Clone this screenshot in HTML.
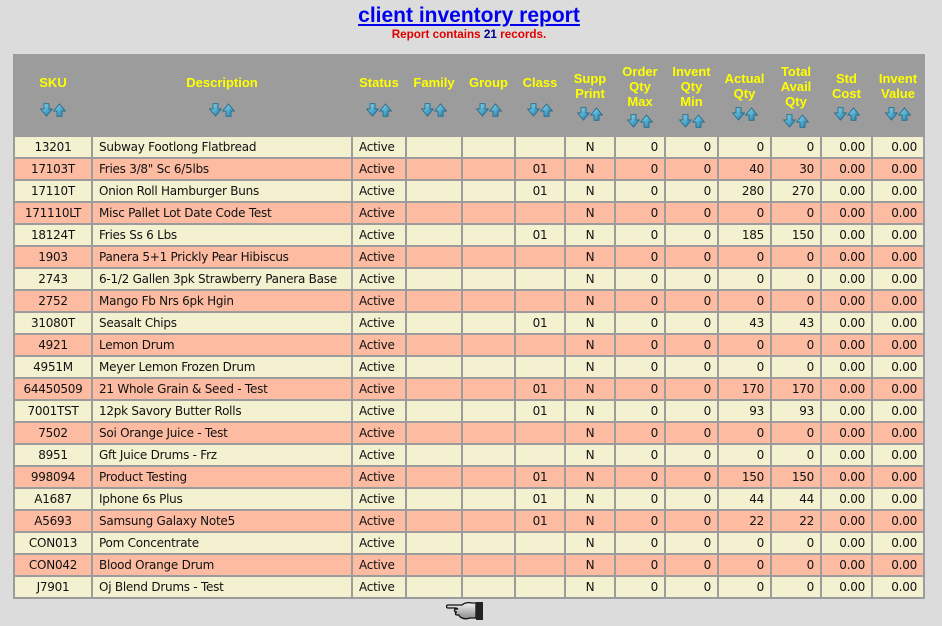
<!DOCTYPE html>
<html><head><meta charset="utf-8"><style>
body{margin:0;background:#dcdcdc;width:942px;height:626px;overflow:hidden;font-family:"DejaVu Sans","Liberation Sans",sans-serif}
.t1{position:absolute;top:4px;left:0;width:938px;text-align:center;font:bold 21px "Liberation Sans",sans-serif;color:#0000ee;text-decoration:underline}
.t2{position:absolute;top:28px;left:0;width:938px;text-align:center;font:bold 11.7px "Liberation Sans",sans-serif;color:#e00000}
.t2 b{color:#00008b}
table{position:absolute;left:13px;top:54px;width:912px;border-spacing:2px;background:#9c9c9c;table-layout:fixed}
th{color:#ffff00;font:bold 13px/15px "Liberation Sans",sans-serif;height:79px;padding:0;vertical-align:middle}
td{height:20px;padding:0 6px;font-size:12px;letter-spacing:-0.25px;color:#111;white-space:nowrap;overflow:hidden}
tr.a td{background:#f4f1d1}
tr.b td{background:#fdbca2}
.c{text-align:center}.r{text-align:right}
.ar{display:block;height:14px;margin-left:auto;margin-right:auto}
.g1{margin-top:13px}.g2{margin-top:6px}.g3{margin-top:5px}
</style></head><body>
<div class="t1">client inventory report</div>
<div class="t2">Report contains <b>21</b> records.</div>
<svg width="0" height="0" style="position:absolute"><defs>
<linearGradient id="bg" x1="0" y1="0" x2="1" y2="1"><stop offset="0" stop-color="#8fe0f4"/><stop offset="1" stop-color="#1878a8"/></linearGradient>
<g id="ar"><path d="M4 0.7h5v5.3h3.3l-5.8 7l-5.8-7h3.3z" fill="url(#bg)" stroke="#2a6a88" stroke-width="0.9"/><path d="M22 13.3h-5v-5.3h-3.3l5.8-7l5.8 7h-3.3z" fill="url(#bg)" stroke="#2a6a88" stroke-width="0.9"/></g>
</defs></svg>
<table>
<colgroup><col style="width:76px"><col style="width:258px"><col style="width:52px"><col style="width:54px"><col style="width:51px"><col style="width:48px"><col style="width:48px"><col style="width:48px"><col style="width:51px"><col style="width:51px"><col style="width:48px"><col style="width:49px"><col style="width:50px"></colgroup>
<tr>
<th>SKU<svg class="ar g1" width="26" height="14"><use href="#ar"/></svg></th>
<th>Description<svg class="ar g1" width="26" height="14"><use href="#ar"/></svg></th>
<th>Status<svg class="ar g1" width="26" height="14"><use href="#ar"/></svg></th>
<th>Family<svg class="ar g1" width="26" height="14"><use href="#ar"/></svg></th>
<th>Group<svg class="ar g1" width="26" height="14"><use href="#ar"/></svg></th>
<th>Class<svg class="ar g1" width="26" height="14"><use href="#ar"/></svg></th>
<th>Supp<br>Print<svg class="ar g2" width="26" height="14"><use href="#ar"/></svg></th>
<th>Order<br>Qty<br>Max<svg class="ar g3" width="26" height="14"><use href="#ar"/></svg></th>
<th>Invent<br>Qty<br>Min<svg class="ar g3" width="26" height="14"><use href="#ar"/></svg></th>
<th>Actual<br>Qty<svg class="ar g2" width="26" height="14"><use href="#ar"/></svg></th>
<th>Total<br>Avail<br>Qty<svg class="ar g3" width="26" height="14"><use href="#ar"/></svg></th>
<th>Std<br>Cost<svg class="ar g2" width="26" height="14"><use href="#ar"/></svg></th>
<th>Invent<br>Value<svg class="ar g2" width="26" height="14"><use href="#ar"/></svg></th>
</tr>
<tr class="a"><td class="c">13201</td><td>Subway Footlong Flatbread</td><td>Active</td><td></td><td></td><td class="c"></td><td class="c">N</td><td class="r">0</td><td class="r">0</td><td class="r">0</td><td class="r">0</td><td class="r">0.00</td><td class="r">0.00</td></tr>
<tr class="b"><td class="c">17103T</td><td>Fries 3/8" Sc 6/5lbs</td><td>Active</td><td></td><td></td><td class="c">01</td><td class="c">N</td><td class="r">0</td><td class="r">0</td><td class="r">40</td><td class="r">30</td><td class="r">0.00</td><td class="r">0.00</td></tr>
<tr class="a"><td class="c">17110T</td><td>Onion Roll Hamburger Buns</td><td>Active</td><td></td><td></td><td class="c">01</td><td class="c">N</td><td class="r">0</td><td class="r">0</td><td class="r">280</td><td class="r">270</td><td class="r">0.00</td><td class="r">0.00</td></tr>
<tr class="b"><td class="c">171110LT</td><td>Misc Pallet Lot Date Code Test</td><td>Active</td><td></td><td></td><td class="c"></td><td class="c">N</td><td class="r">0</td><td class="r">0</td><td class="r">0</td><td class="r">0</td><td class="r">0.00</td><td class="r">0.00</td></tr>
<tr class="a"><td class="c">18124T</td><td>Fries Ss 6 Lbs</td><td>Active</td><td></td><td></td><td class="c">01</td><td class="c">N</td><td class="r">0</td><td class="r">0</td><td class="r">185</td><td class="r">150</td><td class="r">0.00</td><td class="r">0.00</td></tr>
<tr class="b"><td class="c">1903</td><td>Panera 5+1 Prickly Pear Hibiscus</td><td>Active</td><td></td><td></td><td class="c"></td><td class="c">N</td><td class="r">0</td><td class="r">0</td><td class="r">0</td><td class="r">0</td><td class="r">0.00</td><td class="r">0.00</td></tr>
<tr class="a"><td class="c">2743</td><td>6-1/2 Gallen 3pk Strawberry Panera Base</td><td>Active</td><td></td><td></td><td class="c"></td><td class="c">N</td><td class="r">0</td><td class="r">0</td><td class="r">0</td><td class="r">0</td><td class="r">0.00</td><td class="r">0.00</td></tr>
<tr class="b"><td class="c">2752</td><td>Mango Fb Nrs 6pk Hgin</td><td>Active</td><td></td><td></td><td class="c"></td><td class="c">N</td><td class="r">0</td><td class="r">0</td><td class="r">0</td><td class="r">0</td><td class="r">0.00</td><td class="r">0.00</td></tr>
<tr class="a"><td class="c">31080T</td><td>Seasalt Chips</td><td>Active</td><td></td><td></td><td class="c">01</td><td class="c">N</td><td class="r">0</td><td class="r">0</td><td class="r">43</td><td class="r">43</td><td class="r">0.00</td><td class="r">0.00</td></tr>
<tr class="b"><td class="c">4921</td><td>Lemon Drum</td><td>Active</td><td></td><td></td><td class="c"></td><td class="c">N</td><td class="r">0</td><td class="r">0</td><td class="r">0</td><td class="r">0</td><td class="r">0.00</td><td class="r">0.00</td></tr>
<tr class="a"><td class="c">4951M</td><td>Meyer Lemon Frozen Drum</td><td>Active</td><td></td><td></td><td class="c"></td><td class="c">N</td><td class="r">0</td><td class="r">0</td><td class="r">0</td><td class="r">0</td><td class="r">0.00</td><td class="r">0.00</td></tr>
<tr class="b"><td class="c">64450509</td><td>21 Whole Grain &amp; Seed - Test</td><td>Active</td><td></td><td></td><td class="c">01</td><td class="c">N</td><td class="r">0</td><td class="r">0</td><td class="r">170</td><td class="r">170</td><td class="r">0.00</td><td class="r">0.00</td></tr>
<tr class="a"><td class="c">7001TST</td><td>12pk Savory Butter Rolls</td><td>Active</td><td></td><td></td><td class="c">01</td><td class="c">N</td><td class="r">0</td><td class="r">0</td><td class="r">93</td><td class="r">93</td><td class="r">0.00</td><td class="r">0.00</td></tr>
<tr class="b"><td class="c">7502</td><td>Soi Orange Juice - Test</td><td>Active</td><td></td><td></td><td class="c"></td><td class="c">N</td><td class="r">0</td><td class="r">0</td><td class="r">0</td><td class="r">0</td><td class="r">0.00</td><td class="r">0.00</td></tr>
<tr class="a"><td class="c">8951</td><td>Gft Juice Drums - Frz</td><td>Active</td><td></td><td></td><td class="c"></td><td class="c">N</td><td class="r">0</td><td class="r">0</td><td class="r">0</td><td class="r">0</td><td class="r">0.00</td><td class="r">0.00</td></tr>
<tr class="b"><td class="c">998094</td><td>Product Testing</td><td>Active</td><td></td><td></td><td class="c">01</td><td class="c">N</td><td class="r">0</td><td class="r">0</td><td class="r">150</td><td class="r">150</td><td class="r">0.00</td><td class="r">0.00</td></tr>
<tr class="a"><td class="c">A1687</td><td>Iphone 6s Plus</td><td>Active</td><td></td><td></td><td class="c">01</td><td class="c">N</td><td class="r">0</td><td class="r">0</td><td class="r">44</td><td class="r">44</td><td class="r">0.00</td><td class="r">0.00</td></tr>
<tr class="b"><td class="c">A5693</td><td>Samsung Galaxy Note5</td><td>Active</td><td></td><td></td><td class="c">01</td><td class="c">N</td><td class="r">0</td><td class="r">0</td><td class="r">22</td><td class="r">22</td><td class="r">0.00</td><td class="r">0.00</td></tr>
<tr class="a"><td class="c">CON013</td><td>Pom Concentrate</td><td>Active</td><td></td><td></td><td class="c"></td><td class="c">N</td><td class="r">0</td><td class="r">0</td><td class="r">0</td><td class="r">0</td><td class="r">0.00</td><td class="r">0.00</td></tr>
<tr class="b"><td class="c">CON042</td><td>Blood Orange Drum</td><td>Active</td><td></td><td></td><td class="c"></td><td class="c">N</td><td class="r">0</td><td class="r">0</td><td class="r">0</td><td class="r">0</td><td class="r">0.00</td><td class="r">0.00</td></tr>
<tr class="a"><td class="c">J7901</td><td>Oj Blend Drums - Test</td><td>Active</td><td></td><td></td><td class="c"></td><td class="c">N</td><td class="r">0</td><td class="r">0</td><td class="r">0</td><td class="r">0</td><td class="r">0.00</td><td class="r">0.00</td></tr>
</table>
<svg style="position:absolute;left:446px;top:600px" width="40" height="22" viewBox="0 0 40 22">
<defs><linearGradient id="hg" x1="0" y1="0" x2="0" y2="1"><stop offset="0" stop-color="#f4f4f4"/><stop offset="1" stop-color="#8a8a8a"/></linearGradient></defs>
<path d="M2 5h14c2-2 6-3 10-2h4v15h-6c-3 1-6 1-8 0c-2-1-3-2-3-3h-2c-2 0-2-3 0-3h-1c-2 0-2-3 0-3h2l-2-1h-8c-2 0-2-3 0-3z" fill="url(#hg)" stroke="#111" stroke-width="1.3"/>
<rect x="30" y="2" width="7" height="18" fill="#222"/>
</svg>
</body></html>
